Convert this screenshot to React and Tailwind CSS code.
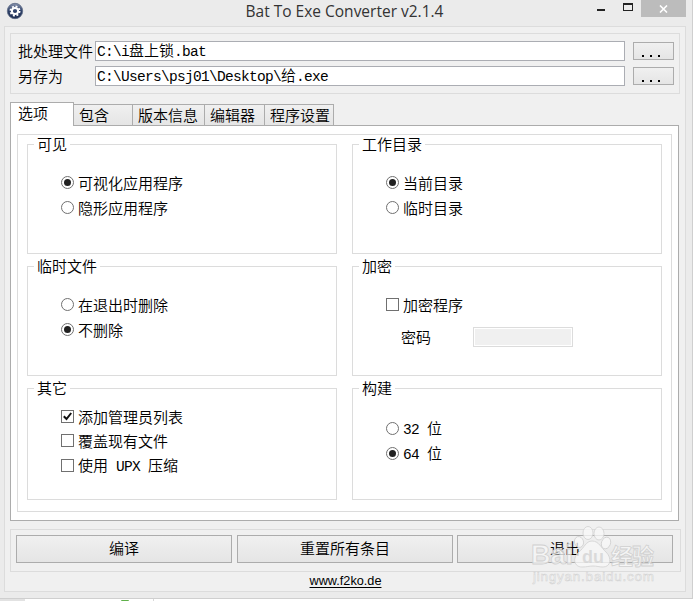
import clsx from 'clsx';

const TABS = [
  { label: '包含', width: 'w-[59px]' },
  { label: '版本信息', width: 'w-[72px]' },
  { label: '编辑器', width: 'w-[60px]' },
  { label: '程序设置', width: 'w-[69px]' },
];

function Mono({ children }) {
  return (
    <span className="font-['Liberation_Mono','Noto_Sans_CJK_SC',monospace] text-[14.5px] font-normal tracking-[-0.7px] whitespace-pre">
      {children}
    </span>
  );
}

function GearIcon() {
  return (
    <svg width="18" height="18" viewBox="0 0 18 18">
      <defs>
        <linearGradient id="gear-bg" x1="0" y1="0" x2="0" y2="1">
          <stop offset="0" stopColor="#8793ad" />
          <stop offset="0.5" stopColor="#2e4068" />
          <stop offset="1" stopColor="#1d2d52" />
        </linearGradient>
      </defs>
      <circle cx="9" cy="9" r="7.7" fill="url(#gear-bg)" stroke="#5b6883" strokeWidth="0.8" />
      <circle cx="9" cy="9" r="3.1" fill="none" stroke="#fff" strokeWidth="2" />
      <circle cx="9" cy="9" r="4.6" fill="none" stroke="#fff" strokeWidth="1.8" strokeDasharray="1.9 1.71" />
    </svg>
  );
}

function TitleBar() {
  return (
    <header className="flex h-[26px] items-start">
      <div className="w-[120px] pt-[2px] pl-[6px]">
        <GearIcon />
      </div>
      <h1 className="w-[449px] text-center font-['Open_Sans',sans-serif] text-[15.5px] leading-[23px] font-normal text-[#333]">
        Bat To Exe Converter v2.1.4
      </h1>
      <div className="flex w-[72px] items-start pl-[28px]">
        <span className="mt-[9px] h-[2px] w-[8px] bg-[#222]" />
        <span className="mt-[3px] ml-[18px] h-[8px] w-[10px] border border-t-2 border-[#222]" />
      </div>
      <button type="button" className="flex h-[17px] w-[45px] items-center justify-center bg-[#bcbcbc]">
        <svg width="9" height="8" viewBox="0 0 9 8" stroke="#fff" strokeWidth="1.6">
          <path d="M1 0.5 8 7.5M8 0.5 1 7.5" />
        </svg>
      </button>
    </header>
  );
}

function FileRow({ label, children }) {
  return (
    <div className="flex h-[20px] items-center">
      <span className="-mt-px w-[77px] whitespace-nowrap">{label}</span>
      <div className="flex h-[20px] w-[530px] items-center border border-[#abadb3] bg-white pl-[1px] leading-[18px]">
        <span className="whitespace-nowrap">{children}</span>
      </div>
      <button
        type="button"
        className="ml-[8px] flex h-[18px] w-[41px] items-end gap-[6px] border border-[#acacac] bg-linear-to-b from-[#f0f0f0] to-[#e5e5e5] pb-[2px] pl-[8px]"
        aria-label="..."
      >
        <i className="size-[2px] bg-black" />
        <i className="size-[2px] bg-black" />
        <i className="size-[2px] bg-black" />
      </button>
    </div>
  );
}

function Group({ title, className, children }) {
  return (
    <section className={clsx('border border-[#dcdcdc]', className)}>
      <h2 className="-mt-[9px] mb-[2px] ml-[6px] h-[16px] w-fit bg-white px-[3px] leading-[15px]">{title}</h2>
      <div className="flex flex-col pl-[33px]">{children}</div>
    </section>
  );
}

function Radio({ checked, children }) {
  return (
    <label className="flex h-[25px] items-center">
      <span className="flex size-[13px] items-center justify-center rounded-full border border-[#707070] bg-white">
        {checked && <span className="size-[7px] rounded-full bg-[#212121]" />}
      </span>
      <span className="mt-px ml-[4px] leading-[20px]">{children}</span>
    </label>
  );
}

function Checkbox({ checked, children }) {
  return (
    <label className="flex h-[25px] items-center">
      <span className="flex size-[13px] items-center justify-center border border-[#707070] bg-white">
        {checked && (
          <svg width="9" height="9" viewBox="0 0 9 9" fill="none" stroke="#111" strokeWidth="2">
            <path d="M0.8 4.2 3.5 7 8.2 1" />
          </svg>
        )}
      </span>
      <span className="mt-px ml-[4px] leading-[20px]">{children}</span>
    </label>
  );
}

function ActionButton({ className, children }) {
  return (
    <button
      type="button"
      className={clsx(
        'h-[28px] w-[216px] border border-[#acacac] bg-linear-to-b from-[#f0f0f0] to-[#e5e5e5] pb-[2px] leading-[22px]',
        className
      )}
    >
      {children}
    </button>
  );
}

function Watermark() {
  return (
    <svg
      className="pointer-events-none absolute top-[522px] left-[528px]"
      width="132"
      height="66"
      viewBox="0 0 132 66"
      fill="#f8f8f8"
      fillOpacity="0.75"
      stroke="#d0d0d0"
      strokeWidth="0.8"
    >
      <text x="3" y="42" textLength="42" lengthAdjust="spacingAndGlyphs" fontFamily="Liberation Sans, sans-serif" fontWeight="bold" fontSize="27">
        Bai
      </text>
      <ellipse cx="51" cy="20" rx="4.5" ry="5.5" transform="rotate(-15 51 20)" />
      <ellipse cx="60" cy="11" rx="5" ry="6.5" />
      <ellipse cx="71" cy="11.5" rx="5" ry="6.5" />
      <ellipse cx="78" cy="21" rx="4.5" ry="6" transform="rotate(20 78 21)" />
      <path d="M64 19C58 19 56 26 51 30 44 36 46 45 54 45 59 45 61 44 65 44 69 44 71 45 75 45 83 45 84 36 78 30 73 26 71 19 64 19Z" />
      <text x="54" y="41" fill="#d2d2d2" stroke="none" fontFamily="Liberation Sans, sans-serif" fontWeight="bold" fontSize="18">
        du
      </text>
      <text x="83" y="42" textLength="43" fontFamily="Noto Sans CJK SC, sans-serif" fontWeight="bold" fontSize="22">
        经验
      </text>
      <text x="5" y="59" textLength="121" strokeWidth="0.5" fontFamily="Liberation Sans, sans-serif" fontSize="13.5">
        jingyan.baidu.com
      </text>
    </svg>
  );
}

export default function App() {
  return (
    <div className="relative flex h-[601px] w-[693px] flex-col overflow-hidden bg-white font-['Noto_Sans_CJK_SC',sans-serif] text-[15px] leading-[20px] font-[350] text-black">
      <div className="h-[599px] border-r border-b border-[#cfcfcf] bg-[#ebebeb]">
        <TitleBar />
        <main className="ml-[4px] h-[566px] w-[682px] border border-[#dcdcdc] bg-[#f0f0f0] pt-[6px] pl-[5px]">
          <div className="flex h-[61px] w-[670px] flex-col gap-[5px] border border-[#dcdcdc] pt-[7px] pl-[7px]">
            <FileRow label="批处理文件">
              <Mono>C:\i</Mono>盘上锁<Mono>.bat</Mono>
            </FileRow>
            <FileRow label="另存为">
              <Mono>C:\Users\psj01\Desktop\</Mono>给<Mono>.exe</Mono>
            </FileRow>
          </div>

          <nav className="relative z-10 mt-[8px] -mb-px flex h-[24px] items-end">
            <div className="h-[24px] w-[64px] border border-b-0 border-[#acacac] bg-white pl-[7px] leading-[20px]">选项</div>
            {TABS.map((tab) => (
              <div
                key={tab.label}
                className={clsx(
                  'h-[22px] border border-l-0 border-[#acacac] bg-linear-to-b from-[#f0f0f0] to-[#e5e5e5] pl-[5px] leading-[19px] whitespace-nowrap',
                  tab.width
                )}
              >
                {tab.label}
              </div>
            ))}
          </nav>

          <div className="h-[396px] w-[669px] border border-[#acacac] bg-white pt-[8px] pl-[6px]">
            <div className="grid h-[378px] w-[655px] grid-cols-[310px_310px] grid-rows-[110px_110px_112px] gap-x-[15px] gap-y-[12px] border border-[#dcdcdc] pt-[9px] pl-[9px]">
              <Group title="可见">
                <div className="mt-[16px]">
                  <Radio checked>可视化应用程序</Radio>
                  <Radio>隐形应用程序</Radio>
                </div>
              </Group>
              <Group title="工作目录">
                <div className="mt-[16px]">
                  <Radio checked>当前目录</Radio>
                  <Radio>临时目录</Radio>
                </div>
              </Group>
              <Group title="临时文件">
                <div className="mt-[16px]">
                  <Radio>在退出时删除</Radio>
                  <Radio checked>不删除</Radio>
                </div>
              </Group>
              <Group title="加密">
                <div className="mt-[16px]">
                  <Checkbox>加密程序</Checkbox>
                </div>
                <div className="mt-[10px] flex items-center pl-[15px]">
                  <span className="w-[72px]">密码</span>
                  <span className="h-[20px] w-[100px] border border-[#dcdcdc] bg-white p-px">
                    <span className="block h-full bg-[#f0f0f0]" />
                  </span>
                </div>
              </Group>
              <Group title="其它">
                <div className="mt-[6px]">
                  <Checkbox checked>添加管理员列表</Checkbox>
                  <div className="-mt-px">
                    <Checkbox>覆盖现有文件</Checkbox>
                  </div>
                  <Checkbox>
                    使用<Mono> UPX </Mono>压缩
                  </Checkbox>
                </div>
              </Group>
              <Group title="构建">
                <div className="mt-[18px]">
                  <Radio>
                    <Mono>32 </Mono>位
                  </Radio>
                  <Radio checked>
                    <Mono>64 </Mono>位
                  </Radio>
                </div>
              </Group>
            </div>
          </div>

          <footer className="mt-[8px] flex h-[43px] w-[671px] border border-[#dcdcdc] pt-[5px] pl-[5px]">
            <ActionButton>编译</ActionButton>
            <ActionButton className="ml-[5px]">重置所有条目</ActionButton>
            <ActionButton className="ml-[4px]">退出</ActionButton>
          </footer>
          <p className="w-[671px] text-center font-['Liberation_Sans',sans-serif] text-[12.7px] leading-[18px] font-normal">
            <a className="underline underline-offset-2">www.f2ko.de</a>
          </p>
        </main>
      </div>
      <div className="flex h-[2px] items-end">
        <span className="h-[2px] w-[25px] bg-[#e2e2e2]" />
        <span className="ml-[96px] h-px w-[8px] rounded-t-full bg-[#5fb04a]" />
        <span className="ml-[24px] h-[2px] w-px bg-[#d8d8d8]" />
      </div>
      <Watermark />
    </div>
  );
}
